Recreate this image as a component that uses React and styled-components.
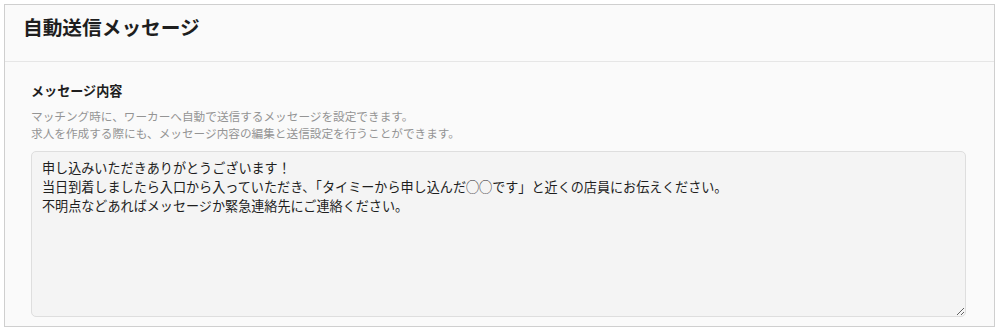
import React from "react";
import styled, { createGlobalStyle } from "styled-components";

const Global = createGlobalStyle`
  html, body { margin: 0; padding: 0; background: #ffffff; }
  body { font-family: "Noto Sans CJK JP", "Noto Sans", sans-serif; }
  * { box-sizing: border-box; }
`;

const Card = styled.section`
  margin: 4px 0 0 4px;
  width: 991px;
  height: 323px;
  border: 1px solid #cfcfcf;
  background: #fafafa;
  display: flex;
  flex-direction: column;
`;

const Header = styled.header`
  height: 57px;
  flex: none;
  border-bottom: 1px solid #e6e6e6;
  padding: 8px 0 0 18px;
`;

const Title = styled.h1`
  margin: 0;
  font-size: 19.7px;
  line-height: 28px;
  font-weight: 700;
  color: #1e1e1e;
  letter-spacing: 0;
`;

const Body = styled.div`
  flex: 1;
  padding: 20px 28px 9px 26px;
  display: flex;
  flex-direction: column;
`;

const Label = styled.h2`
  margin: 0 0 7px;
  font-size: 13.1px;
  line-height: 18px;
  font-weight: 700;
  color: #1e1e1e;
`;

const Description = styled.p`
  margin: 0 0 10px;
  font-size: 11.65px;
  line-height: 17px;
  color: #949494;
`;

const MessageBox = styled.textarea`
  flex: 1;
  width: 100%;
  margin: 0;
  padding: 6px 10px;
  border: 1px solid #dedede;
  border-radius: 5px;
  background: #f4f4f4;
  font-family: "Noto Sans CJK JP", "Noto Sans", sans-serif;
  font-size: 13.1px;
  line-height: 19px;
  color: #1e1e1e;
  resize: both;
  outline: none;
`;

const message =
  "申し込みいただきありがとうございます！\n当日到着しましたら入口から入っていただき、「タイミーから申し込んだ◯◯です」と近くの店員にお伝えください。\n不明点などあればメッセージか緊急連絡先にご連絡ください。";

export default function App() {
  return (
    <>
      <Global />
      <Card>
        <Header>
          <Title>自動送信メッセージ</Title>
        </Header>
        <Body>
          <Label>メッセージ内容</Label>
          <Description>
            マッチング時に、ワーカーへ自動で送信するメッセージを設定できます。
            <br />
            求人を作成する際にも、メッセージ内容の編集と送信設定を行うことができます。
          </Description>
          <MessageBox defaultValue={message} />
        </Body>
      </Card>
    </>
  );
}
